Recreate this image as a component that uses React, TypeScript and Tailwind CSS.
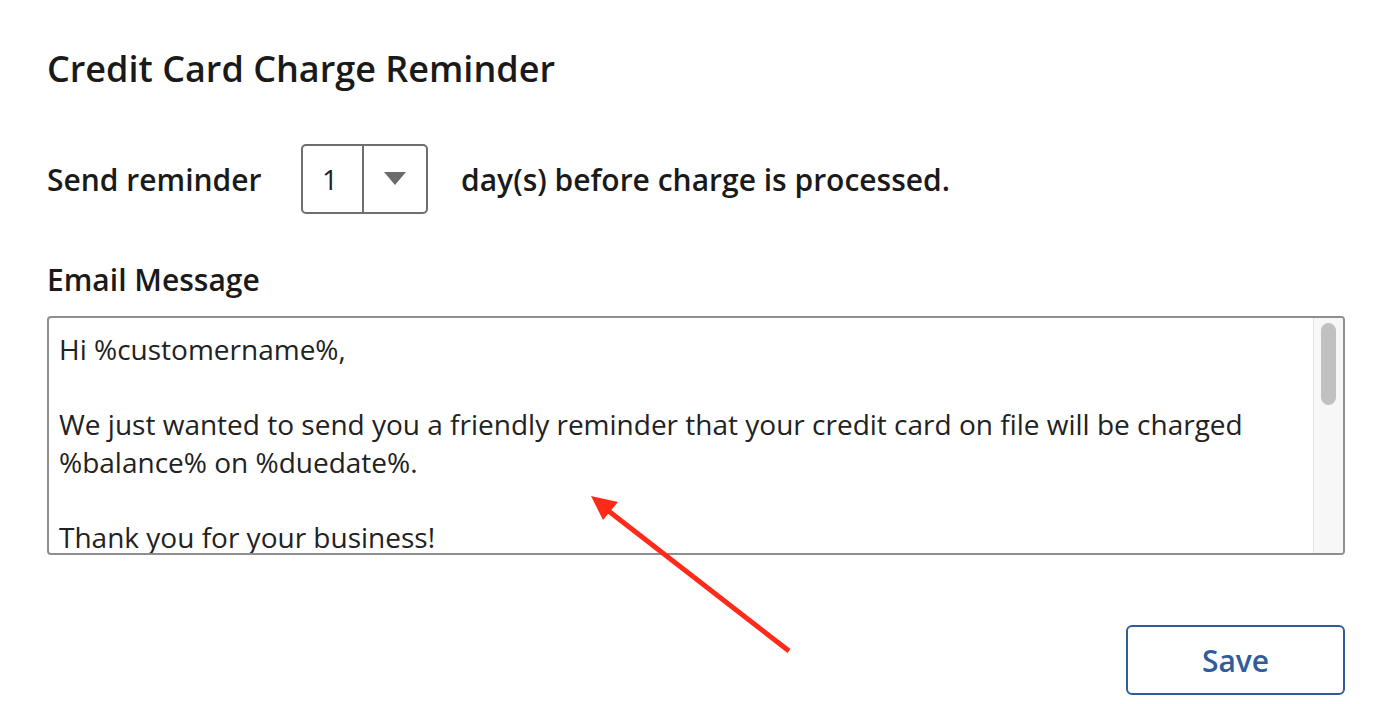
export default function App() {
  return (
    <div className="relative w-[1400px] h-[704px] bg-white text-[#1a1a1a] overflow-hidden" style={{ fontFamily: '"Open Sans", sans-serif' }}>
      <div className="pl-[47px] pr-[55px] pt-[43px]">
        <h1 className="text-[36px] font-semibold leading-[52px]">Credit Card Charge Reminder</h1>

        <div className="mt-[49px] flex items-center h-[70px]">
          <span className="text-[30px] font-semibold w-[254px]">Send reminder</span>
          <div className="flex h-[70px] w-[127px] border-2 border-[#6e6e6e] rounded-[5px]">
            <div className="w-[61px] border-r-2 border-[#6e6e6e] flex items-center pl-[19px] text-[28px] text-[#222]">1</div>
            <div className="flex-1 flex items-center justify-center">
              <svg width="22" height="14" viewBox="0 0 22 14">
                <polygon points="0,0 22,0 11,13" fill="#6b6b6b" />
              </svg>
            </div>
          </div>
          <span className="ml-[33px] text-[30px] font-semibold">day(s) before charge is processed.</span>
        </div>

        <div className="mt-[46px] text-[30px] font-semibold leading-[40px]">Email Message</div>

        <div className="mt-[16px] flex h-[239px] border-2 border-[#8e8e8e] rounded-[4px] overflow-hidden">
          <div className="flex-1 pl-[10px] pt-[13px] text-[28px] leading-[37.5px] text-[#222] overflow-hidden">
            <p>Hi %customername%,</p>
            <p>&nbsp;</p>
            <p>We just wanted to send you a friendly reminder that your credit card on file will be charged %balance% on %duedate%.</p>
            <p>&nbsp;</p>
            <p>Thank you for your business!</p>
          </div>
          <div className="w-[30px] bg-[#f7f7f7] border-l border-[#e3e3e3] pt-[5px] flex justify-center">
            <div className="w-[15px] h-[82px] rounded-full bg-[#c1c1c1]" />
          </div>
        </div>

        <div className="mt-[70px] flex justify-end">
          <button className="w-[219px] h-[70px] border-2 border-[#2f5d9b] rounded-[6px] text-[#2f5d9b] text-[30px] font-semibold">Save</button>
        </div>
      </div>

      <svg className="absolute left-0 top-0 pointer-events-none" width="1400" height="704">
        <line x1="789" y1="651" x2="606" y2="509" stroke="#ff2a1a" strokeWidth="5" />
        <polygon points="591,496 618,502 603,520" fill="#ff2a1a" />
      </svg>
    </div>
  );
}
